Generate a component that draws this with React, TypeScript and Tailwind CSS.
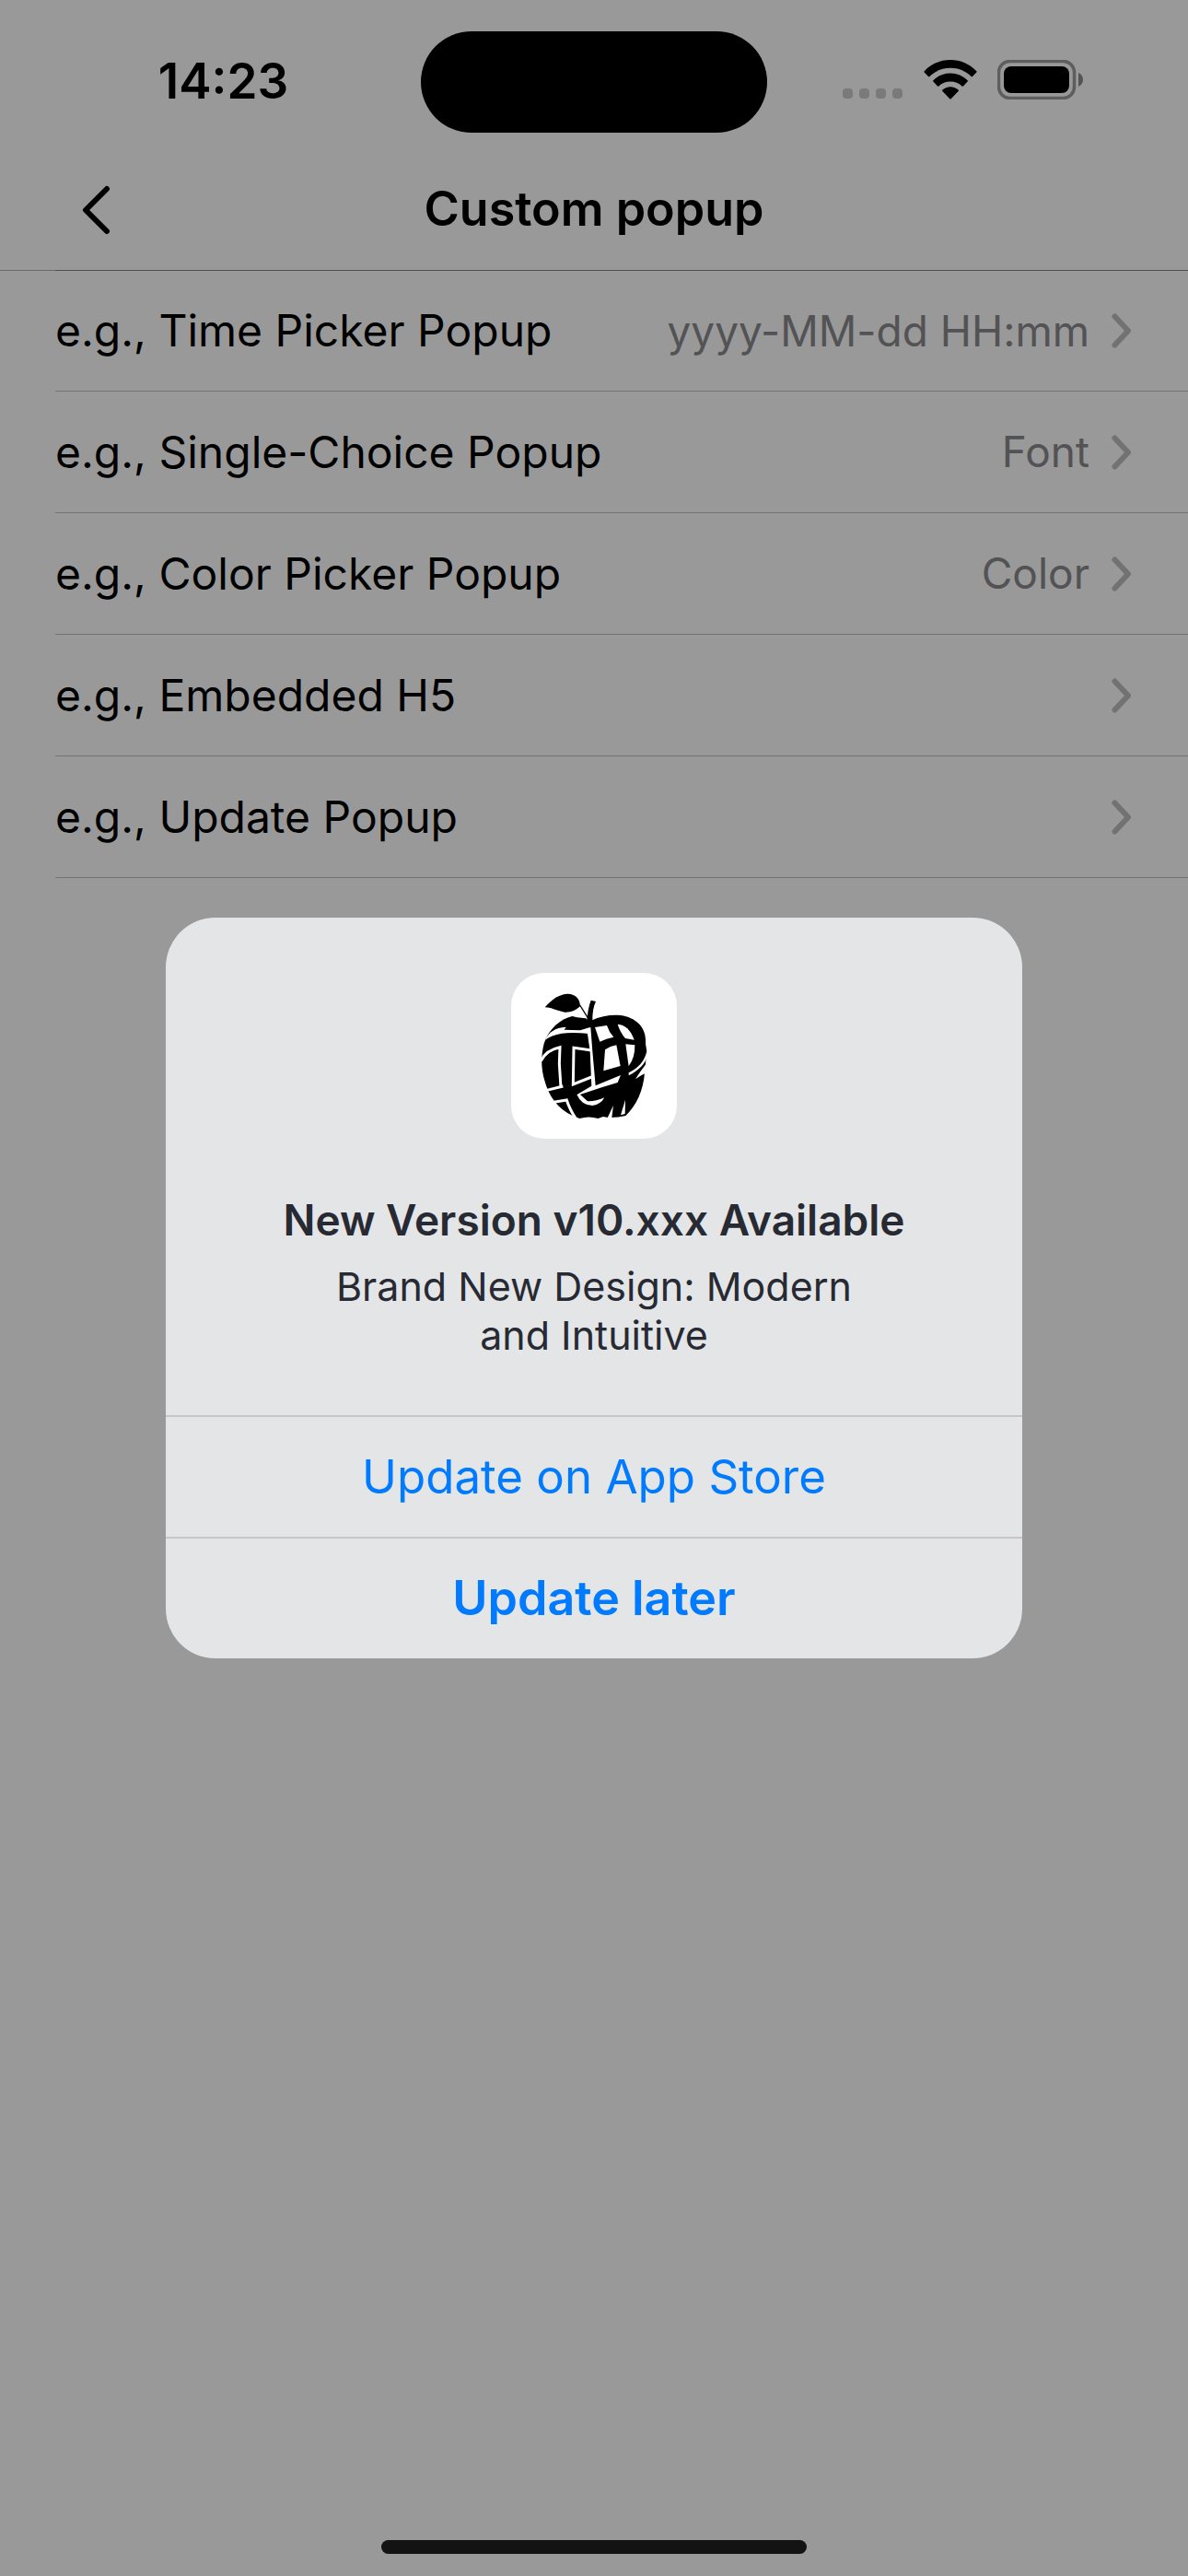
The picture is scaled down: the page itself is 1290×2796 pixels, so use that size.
type Row = { label: string; value?: string };

const rows: Row[] = [
  { label: "e.g., Time Picker Popup", value: "yyyy-MM-dd HH:mm" },
  { label: "e.g., Single-Choice Popup", value: "Font" },
  { label: "e.g., Color Picker Popup", value: "Color" },
  { label: "e.g., Embedded H5" },
  { label: "e.g., Update Popup" },
];

function WifiIcon() {
  return (
    <svg viewBox="0 0 58 43" className="h-[43px] w-[58px]" aria-hidden="true">
      <path d="M29 0C40 0 50 4.400 57.300 12.200a1 1 0 0 1 0 1.400L53 18a1 1 0 0 1-1.400 0C45.500 12 37.600 8.800 29 8.800S12.500 12 6.400 18A1 1 0 0 1 5 18L.7 13.600a1 1 0 0 1 0-1.400C8 4.400 18 0 29 0z" />
      <path d="M29 14.600c7.200 0 13.800 2.900 18.600 7.600a1 1 0 0 1 0 1.400L43 28.500a1 1 0 0 1-1.400 0C38.200 25.300 33.800 23.600 29 23.600s-9.200 1.700-12.600 4.900a1 1 0 0 1-1.400 0l-4.600-4.900a1 1 0 0 1 0-1.400C15.200 17.500 21.800 14.600 29 14.600z" />
      <path d="M29 29.200c3.300 0 6.300 1.300 8.600 3.400a1 1 0 0 1 0 1.500l-7.900 8.100a1 1 0 0 1-1.400 0l-7.900-8.100a1 1 0 0 1 0-1.500c2.300-2.100 5.300-3.400 8.600-3.400z" />
    </svg>
  );
}

function BatteryIcon() {
  return (
    <svg viewBox="0 0 93 43" className="h-[43px] w-[93px]" aria-hidden="true">
      <rect x="1.500" y="1.500" width="82" height="40" rx="12" fill="none" stroke="#9d9d9d" strokeWidth="3.500" />
      <rect x="7" y="7" width="71" height="29" rx="8" />
      <path d="M88 14c3 1.300 5 4 5 7.500S91 27.700 88 29z" fill="#8d8d8d" />
    </svg>
  );
}

function AppleLogo() {
  return (
    <svg viewBox="15 15 540 540" className="size-[180px]" role="img" aria-label="App icon">
      <path d="M125 127C148 100 172 84 200 83C222 83 240 98 240 123C228 136 208 144 190 143C166 140 150 128 125 127z" />
      <path d="M239 120L268 166" stroke="#000" strokeWidth="4" />
      <path d="M275 104L291 108Q279 132 280 172L262 170Q265 130 275 104z" />
      <path d="M268 170L258 163L230 160L214 156C176 165 138 196 122 245C112 285 112 325 124 365C137 415 165 455 215 480L238 489Q268 480 298 489L315 483L330 486Q362 487 388 480C424 447 446 396 450 340L457 270Q452 250 453 232C452 190 420 160 372 153Q320 150 276 170z" />
      <g fill="#fff">
        <path d="M126 233C137 208 158 193 194 191L188 200L240 202L272 192L270 213Q215 207 180 212Q145 218 126 233z" />
        <path d="M262 200L274 192L280 270L290 382L372 348L362 372L310 388L240 411L230 411L277 383L272 270z" />
        <path d="M229 411Q244 446 280 447Q307 443 319 421Q290 434 264 433L240 411z" />
        <path d="M348 446L328 489L343 486z" />
        <path d="M387 428L372 478L386 474z" />
        <path d="M288 192L327 186Q334 208 349 224Q325 228 304 239z" />
        <path d="M362 182C385 183 405 200 416 233L387 228Q370 208 362 182z" />
        <path d="M321 265Q338 253 358 250L371 318L316 334z" />
        <path d="M388 247L418 250Q419 290 398 319z" />
        <path d="M457 268C452 300 430 325 398 340L398 349C432 333 452 310 459 286z" />
        <path d="M458 308Q440 328 420 361L440 348L452 342z" />
      </g>
      <g fill="none" stroke="#fff" strokeWidth="9">
        <path d="M277 267L219 259L217 378L277 354" />
        <path d="M112 302Q128 266 174 257L172 310L177 388M128 398L184 384" />
        <path d="M154 436L196 429Q205 458 226 490" />
      </g>
    </svg>
  );
}

function Chevron() {
  return (
    <svg viewBox="0 0 22 38" className="h-[38px] w-[22px]" aria-hidden="true">
      <path d="M3.500 3.500L18 19L3.500 34.500" fill="none" stroke="#bebebe" strokeWidth="6" strokeLinecap="round" strokeLinejoin="round" />
    </svg>
  );
}

export default function App() {
  return (
    <div className="relative flex min-h-screen flex-col bg-white font-['Inter',sans-serif] text-black">
      <div className="grid h-[162px] grid-cols-[1fr_376px_1fr] items-start pt-[34px]">
        <div className="flex h-[110px] items-center justify-center pl-7 text-[53px] font-semibold">14:23</div>
        <div className="h-[110px] rounded-full bg-black" />
        <div className="flex h-[105px] items-center justify-end pr-[114px]">
          <div className="mr-[23px] flex gap-[7px] pt-[30px]">
            {[0, 1, 2, 3].map((dot) => (
              <span key={dot} className="size-[11px] rounded-[4px] bg-[#cbcbcb]" />
            ))}
          </div>
          <WifiIcon />
          <div className="ml-[22px]">
            <BatteryIcon />
          </div>
        </div>
      </div>

      <header className="grid h-[132px] grid-cols-[1fr_auto_1fr] items-center border-b border-[#b3b3b3]">
        <button type="button" aria-label="Back" className="ml-[86px] justify-self-start">
          <svg viewBox="0 0 36 54" className="h-[54px] w-9" aria-hidden="true">
            <path d="M30 4L7 27L30 50" fill="none" stroke="#000" strokeWidth="6" strokeLinecap="round" strokeLinejoin="round" />
          </svg>
        </button>
        <h1 className="pb-0.5 text-[52px] font-semibold">Custom popup</h1>
      </header>

      <ul className="-mt-px ml-[60px]">
        {rows.map((row) => (
          <li key={row.label} className="h-[132px] border-b border-[#c2c2c2] first:border-t first:border-t-[#858585]">
            <button type="button" className="flex h-full w-full items-center pr-[61px] text-left">
              <span className="text-[48px]">{row.label}</span>
              <span className="mr-6 ml-auto text-[46px] text-[#8a8a8e]">{row.value}</span>
              <Chevron />
            </button>
          </li>
        ))}
      </ul>

      <div className="mx-auto mt-auto mb-6 h-[15px] w-[462px] rounded-full bg-[#212121]" />

      <div className="absolute inset-0 flex items-center justify-center bg-black/40 px-[180px]">
        <div
          role="dialog"
          aria-modal="true"
          aria-labelledby="update-title"
          className="flex w-full flex-col overflow-hidden rounded-[54px] bg-[#e3e5e7] text-center text-[#272a33]"
        >
          <div className="flex flex-col items-center px-30 pt-[60px] pb-[60px]">
            <div className="overflow-hidden rounded-[36px] bg-white">
              <AppleLogo />
            </div>
            <h2 id="update-title" className="mt-[58px] text-[46px] leading-[60px] font-semibold whitespace-nowrap">
              New Version v10.xxx Available
            </h2>
            <p className="mt-4 max-w-[600px] text-[43px] leading-[53px]">Brand New Design: Modern and Intuitive</p>
          </div>
          <button type="button" className="h-[132px] border-t-2 border-[#c6c6c8] text-[51px] text-[#007aff]">
            Update on App Store
          </button>
          <button type="button" className="h-[132px] border-t-2 border-[#c6c6c8] text-[52px] font-semibold text-[#007aff]">
            Update later
          </button>
        </div>
      </div>
    </div>
  );
}
